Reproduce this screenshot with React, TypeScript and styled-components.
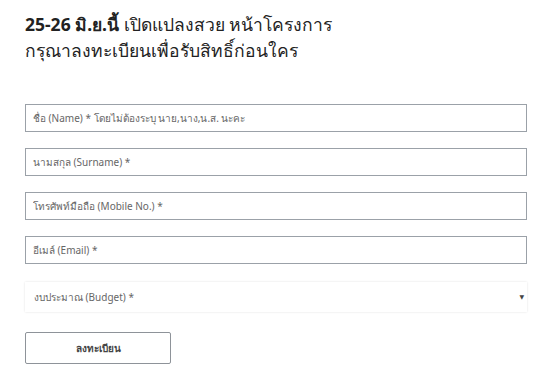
import React from 'react';
import styled, { createGlobalStyle } from 'styled-components';

const GlobalStyle = createGlobalStyle`
  html, body {
    margin: 0;
    padding: 0;
    background: #ffffff;
  }
  body {
    font-family: "Noto Sans", "DejaVu Sans", sans-serif;
    color: #333;
  }
`;

const Page = styled.div`
  width: 550px;
  height: 379px;
  padding: 11px 23px 0 25px;
  box-sizing: border-box;
`;

const Heading = styled.h2`
  margin: 0 0 41px;
  font-size: 17.5px;
  font-weight: 400;
  line-height: 26px;
  color: #222;
`;

const Strong = styled.span`
  font-weight: 700;
`;

const Form = styled.form`
  display: flex;
  flex-direction: column;
  gap: 16px;
`;

const Field = styled.input`
  width: 502px;
  height: 28px;
  box-sizing: border-box;
  border: 1px solid #9ba1a8;
  border-radius: 0;
  padding: 0 7px;
  font-family: "Noto Sans", "DejaVu Sans", sans-serif;
  font-size: 10px;
  color: #555;
  background: #fff;
  outline: none;

  &::placeholder {
    color: #666;
  }
`;

const SelectBox = styled.div`
  width: 502px;
  height: 30px;
  box-sizing: border-box;
  display: flex;
  align-items: center;
  justify-content: space-between;
  padding: 0 3px 0 9px;
  margin-top: 2px;
  background: #fff;
  box-shadow: 0 0 2px rgba(0, 0, 0, 0.12);
  font-size: 10px;
  color: #666;
`;

const Caret = styled.span`
  font-size: 6px;
  color: #444;
`;

const Submit = styled.button`
  width: 146px;
  height: 32px;
  margin-top: 4px;
  box-sizing: border-box;
  border: 1px solid #8e9399;
  border-radius: 2px;
  background: #fff;
  font-family: "Noto Sans", "DejaVu Sans", sans-serif;
  font-size: 10px;
  font-weight: 700;
  color: #444;
`;

const fields = [
  'ชื่อ (Name) * โดยไม่ต้องระบุ นาย,นาง,น.ส. นะคะ',
  'นามสกุล (Surname) *',
  'โทรศัพท์มือถือ (Mobile No.) *',
  'อีเมล์ (Email) *',
];

export default function App() {
  return (
    <Page>
      <GlobalStyle />
      <Heading>
        <Strong>25-26 มิ.ย.นี้</Strong> เปิดแปลงสวย หน้าโครงการ
        <br />
        กรุณาลงทะเบียนเพื่อรับสิทธิ์ก่อนใคร
      </Heading>
      <Form>
        {fields.map((f) => (
          <Field key={f} placeholder={f} />
        ))}
        <SelectBox>
          <span>งบประมาณ (Budget) *</span>
          <Caret>▼</Caret>
        </SelectBox>
        <Submit type="button">ลงทะเบียน</Submit>
      </Form>
    </Page>
  );
}
